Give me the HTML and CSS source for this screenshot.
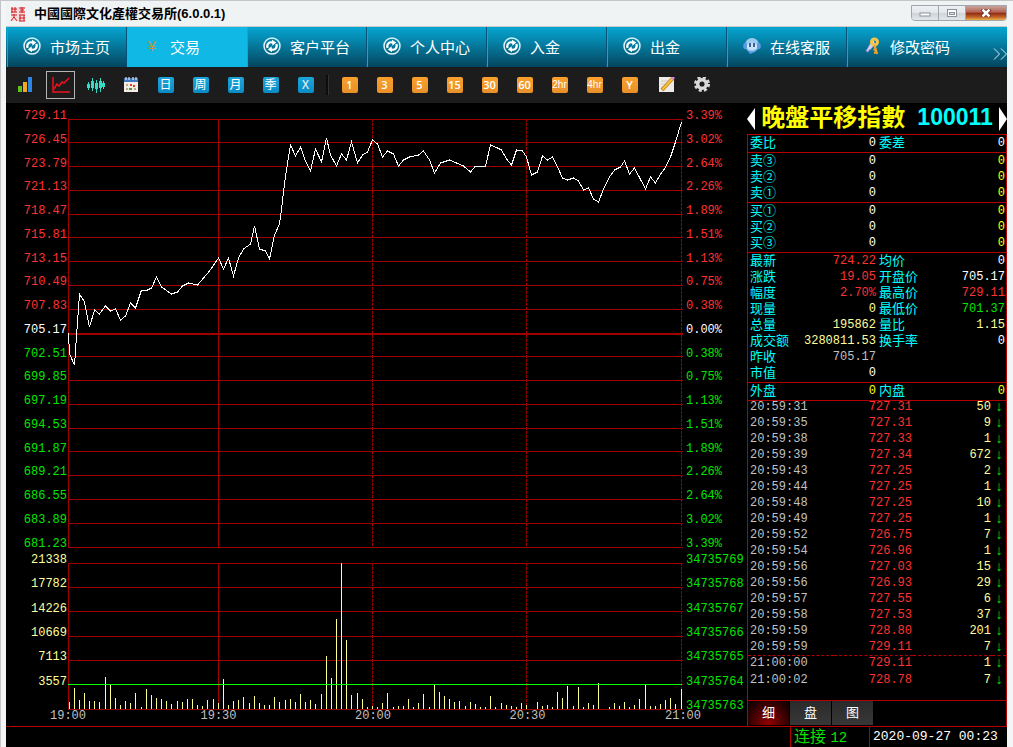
FILE: index.html
```html
<!DOCTYPE html>
<html lang="zh">
<head>
    <meta charset="UTF-8">
    <meta name="viewport" content="width=device-width, initial-scale=1.0">
    <title>中國國際文化產權交易所(6.0.0.1)</title>
    <link rel="stylesheet" href="styles.css">
</head>

<body>
    <svg class="defs" aria-hidden="true">
        <symbol id="swirl" viewBox="0 0 18 18">
            <circle cx="9" cy="9" r="8" fill="none" stroke="#d9f1f7" stroke-width="1.5"/>
            <path d="M4.5 11 C3.4 6.8 6.4 4.4 10 5.6" fill="none" stroke="#fff" stroke-width="2.2"/>
            <path d="M9 2.8 L13.2 5.6 L9.4 8.8 Z" fill="#fff"/>
            <path d="M13.5 7 C14.6 11.2 11.6 13.6 8 12.4" fill="none" stroke="#fff" stroke-width="2.2"/>
            <path d="M9 15.2 L4.8 12.4 L8.6 9.2 Z" fill="#fff"/>
        </symbol>
    </svg>

    <div class="window">
        <header class="titlebar">
            <svg class="seal" viewBox="0 0 16 16">
                <path d="M1 1H15V15H1Z" fill="#f7dcdc"/>
                <path d="M1 3H7M2 1V7M5 1V6M1 6H7M9 2H15M10 4H14M9 6H15M12 1V7M1 9H7M4 8V12M1 15L4 11L7 15M9 9H15M10 9V15M14 9V15M9 12H15M9 15H15" fill="none" stroke="#cf1c24" stroke-width="1"/>
            </svg>
            <h1>中國國際文化產權交易所(6.0.0.1)</h1>
            <div class="window-buttons">
                <button type="button" aria-label="最小化"><svg viewBox="0 0 12 8"><rect x="1" y="4" width="10" height="3" fill="#fff" stroke="#8a8f98"/></svg></button>
                <button type="button" aria-label="最大化"><svg viewBox="0 0 12 8"><rect x="1.5" y=".5" width="9" height="7" fill="#fff" stroke="#8a8f98"/><rect x="3.5" y="3.5" width="5" height="2" fill="#dde" stroke="#8a8f98"/></svg></button>
                <button type="button" class="close" aria-label="关闭"><svg viewBox="0 0 12 8"><path d="M2 0L10 8M10 0L2 8" stroke="#6b2a20" stroke-width="4"/><path d="M2.5 .5L9.5 7.5M9.5 .5L2.5 7.5" stroke="#fff" stroke-width="2.5"/></svg></button>
            </div>
        </header>

        <nav class="nav">
            <a href="#"><svg><use href="#swirl"/></svg>市场主页</a>
            <a href="#" class="active"><span class="yen">¥</span>交易</a>
            <a href="#"><svg><use href="#swirl"/></svg>客户平台</a>
            <a href="#"><svg><use href="#swirl"/></svg>个人中心</a>
            <a href="#"><svg><use href="#swirl"/></svg>入金</a>
            <a href="#"><svg><use href="#swirl"/></svg>出金</a>
            <a href="#"><svg viewBox="0 0 18 18">
                <circle cx="9" cy="8" r="7" fill="#9ccbf2"/>
                <ellipse cx="2.5" cy="9" rx="2.3" ry="3.2" fill="#5b9be0"/>
                <ellipse cx="15.5" cy="9" rx="2.3" ry="3.2" fill="#5b9be0"/>
                <path d="M4 8C4 5 14 5 14 8V11C13 13 5 13 4 11Z" fill="#c9e4fa"/>
                <path d="M7 6V10M11 6V10" stroke="#1b3f86" stroke-width="1.6"/>
                <path d="M4 13C8 15 11 15 14 12L12 15L7 17Z" fill="#5b9be0"/>
            </svg>在线客服</a>
            <a href="#"><svg viewBox="0 0 18 18">
                <path d="M10 2L3 14L5 15L6 13L8 12L12 7" fill="#d6d2f5" stroke="#8f8ad0" stroke-width=".8"/>
                <circle cx="11.5" cy="5" r="3" fill="none" stroke="#f9c44a" stroke-width="3"/>
                <path d="M11.5 8L14 17M13 12L10.5 13M13.5 15L11 16" stroke="#f2a325" stroke-width="2.2" fill="none"/>
            </svg>修改密码</a>
            <button type="button" class="more" aria-label="更多"><svg viewBox="0 0 14 12"><path d="M1 .5L6.5 6L1 11.5M8 .5L13.5 6L8 11.5" fill="none" stroke="#d5eef5"/></svg></button>
        </nav>

        <div class="toolbar">
            <button type="button" aria-label="行情"><svg viewBox="0 0 16 16"><rect x="0" y="9" width="4" height="6" fill="#5fc21a"/><rect x="5" y="5" width="4" height="10" fill="#f6a81c"/><rect x="10" y="0" width="4" height="15" fill="#2b86e8"/></svg></button>
            <button type="button" class="selected" aria-label="分时"><svg class="wide" viewBox="0 0 20 18"><path d="M2 1V16H19" fill="none" stroke="#f0101c" stroke-width="1.5"/><path d="M3 13L6 8L8 10L11 6L13 7L18 2" fill="none" stroke="#f0101c" stroke-width="1.5"/></svg></button>
            <button type="button" aria-label="K线"><svg class="wide" viewBox="0 0 20 18"><path d="M2.5 6V14M6.5 2V15M10.500 4V17M14.500 2V16M17.500 5V13" stroke="#34dcc4" stroke-width="1"/><path d="M2.500 8V12M6.500 5V12M10.500 7V13M14.500 5V12M17.500 7V11" stroke="#34dcc4" stroke-width="3"/></svg></button>
            <button type="button" aria-label="日历"><svg viewBox="0 0 16 16"><rect x="1" y="2" width="14" height="13" fill="#f4ede4"/><rect x="1" y="1" width="14" height="4" fill="#3f7ac0"/><path d="M3 0V3M6 0V3M10 0V3M13 0V3" stroke="#fff"/><path d="M3 8H5M3 12H5M11 12H13" stroke="#b8a898" stroke-width="2"/><path d="M7 8H9M10 9H12" stroke="#d8432b" stroke-width="2"/><path d="M6 12H9" stroke="#4c9c45" stroke-width="2"/></svg></button>
            <button type="button"><span class="tag">日</span></button>
            <button type="button"><span class="tag">周</span></button>
            <button type="button"><span class="tag">月</span></button>
            <button type="button"><span class="tag">季</span></button>
            <button type="button"><span class="tag">X</span></button>
            <span class="separator"></span>
            <button type="button"><span class="tag minute">1</span></button>
            <button type="button"><span class="tag minute">3</span></button>
            <button type="button"><span class="tag minute">5</span></button>
            <button type="button"><span class="tag minute">15</span></button>
            <button type="button"><span class="tag minute">30</span></button>
            <button type="button"><span class="tag minute">60</span></button>
            <button type="button"><span class="tag minute hour">2hr</span></button>
            <button type="button"><span class="tag minute hour">4hr</span></button>
            <button type="button"><span class="tag minute">Y</span></button>
            <button type="button" class="tools" aria-label="画线"><svg viewBox="0 0 16 16"><rect x="0" y="0" width="15" height="15" fill="#eeeae6"/><path d="M2 4H9M2 7H7M2 10H5" stroke="#cfcac6"/><path d="M3 13L14 1" stroke="#b87a14" stroke-width="3.5"/><path d="M3.5 12.5L14 1" stroke="#fbc43c" stroke-width="2"/><path d="M13 2L15 0" stroke="#d987d8" stroke-width="3"/></svg></button>
            <button type="button" aria-label="设置"><svg viewBox="0 0 16 16"><circle cx="8" cy="7" r="6" fill="none" stroke="#d8d8d8" stroke-width="4" stroke-dasharray="2.7 2.012"/><circle cx="8" cy="7" r="4.300" fill="none" stroke="#d8d8d8" stroke-width="3.500"/></svg></button>
        </div>

        <main class="main">
            <section class="chart">
                <ul class="axis left" id="priceAxis"></ul>
                <div class="plot">
                    <svg viewBox="68 119 615 429" preserveAspectRatio="none">
                        <g id="priceGrid"></g>
                        <polyline class="price" points="68.5,333 69.5,354 74.5,365 79.5,294 84.5,302 89.5,327 94.5,310 99.5,314 105.5,306 110.5,311 115.5,309 120.5,320 125.5,316 130.5,303 135.5,308 141.5,290 147.5,290 151.5,288 156.5,277 161.5,287 171.5,294 177.5,292 182.5,286 188.5,283 197.5,285 203.5,278 209.5,271 218.5,258 223.5,269 228.5,258 233.5,276 238.5,258 243.5,249 250.5,244 254.5,226 259.5,249 265.5,251 269.5,259 274.5,235 279.5,224 281.5,209 285.5,176 290.5,145 295.5,156 300.5,147 305.5,161 310.5,171 315.5,149 321.5,162 326.5,138 330.5,155 336.5,166 341.5,154 346.5,160 351.5,142 357.5,163 362.5,155 367.5,152 372.5,140 377.5,144 382.5,157 387.5,151 393.5,154 398.5,166 403.5,160 409.5,157 418.5,155 423.5,151 429.5,160 434.5,173 440.5,163 449.5,160 463.5,166 470.5,172 475.5,166 485.5,166 490.5,145 497.5,148 501.5,150 506.5,159 511.5,165 516.5,150 522.5,151 526.5,157 531.5,175 537.5,172 542.5,156 547.5,160 552.5,157 558.5,169 562.5,178 567.5,180 573.5,178 578.5,181 583.5,190 588.5,188 593.5,199 598.5,202 603.5,189 609.5,177 614.5,170 620.5,167 624.5,161 629.5,174 634.5,168 645.5,189 650.5,177 655.5,183 660.5,174 664.5,169 670.5,157 675.5,142 681.5,122"/>
                    </svg>
                </div>
                <ul class="axis right" id="percentAxis"></ul>

                <ul class="axis left volume-axis">
                    <li>21338</li><li>17782</li><li>14226</li><li>10669</li><li>7113</li><li>3557</li><li></li>
                </ul>
                <div class="plot">
                    <svg viewBox="68 563 615 147" preserveAspectRatio="none">
                        <g id="volumeGrid"></g>
                        <path class="bars" id="volumeBars"/>
                        <path class="open-interest" d="M68 684.5H682"/>
                    </svg>
                </div>
                <ul class="axis right down">
                    <li>34735769</li><li>34735768</li><li>34735767</li><li>34735766</li><li>34735765</li><li>34735764</li><li>34735763</li>
                </ul>

                <ul class="time-axis">
                    <li>19:00</li><li>19:30</li><li>20:00</li><li>20:30</li><li>21:00</li>
                </ul>
            </section>

            <aside class="quote">
                <div class="symbol">
                    <button type="button" aria-label="上一个"><svg viewBox="0 0 8 24"><path d="M8 1V23L0 12Z" fill="#fff"/></svg></button>
                    <h2>晚盤平移指數</h2>
                    <span class="code">100011</span>
                    <button type="button" aria-label="下一个"><svg viewBox="0 0 8 24"><path d="M0 0V24L8 12Z" fill="#fff"/></svg></button>
                </div>
                <div class="board">
                    <table class="block">
                        <tr><th>委比</th><td>0</td><th>委差</th><td>0</td></tr>
                    </table>
                    <table class="block">
                        <tr><th>卖③</th><td>0</td><th></th><td class="yellow">0</td></tr>
                        <tr><th>卖②</th><td>0</td><th></th><td class="yellow">0</td></tr>
                        <tr><th>卖①</th><td>0</td><th></th><td class="yellow">0</td></tr>
                    </table>
                    <table class="block">
                        <tr><th>买①</th><td>0</td><th></th><td class="yellow">0</td></tr>
                        <tr><th>买②</th><td>0</td><th></th><td class="yellow">0</td></tr>
                        <tr><th>买③</th><td>0</td><th></th><td class="yellow">0</td></tr>
                    </table>
                    <table class="block">
                        <tr><th>最新</th><td class="up">724.22</td><th>均价</th><td>0</td></tr>
                        <tr><th>涨跌</th><td class="up">19.05</td><th>开盘价</th><td>705.17</td></tr>
                        <tr><th>幅度</th><td class="up">2.70%</td><th>最高价</th><td class="up">729.11</td></tr>
                        <tr><th>现量</th><td class="vol">0</td><th>最低价</th><td class="down">701.37</td></tr>
                        <tr><th>总量</th><td class="vol">195862</td><th>量比</th><td class="vol">1.15</td></tr>
                        <tr><th>成交额</th><td class="vol">3280811.53</td><th>换手率</th><td>0</td></tr>
                        <tr><th>昨收</th><td class="grey">705.17</td><th></th><td></td></tr>
                        <tr><th>市值</th><td>0</td><th></th><td></td></tr>
                    </table>
                    <table class="block">
                        <tr><th>外盘</th><td class="yellow">0</td><th>内盘</th><td class="yellow">0</td></tr>
                    </table>
                    <div class="ticks">
                        <table id="ticks"></table>
                    </div>
                    <div class="tabs">
                        <button type="button" class="active">细</button>
                        <button type="button">盘</button>
                        <button type="button">图</button>
                    </div>
                </div>
            </aside>
        </main>

        <footer class="status">
            <span class="connection">连接 <span class="num">12</span></span>
            <time class="num">2020-09-27 00:23</time>
        </footer>
    </div>

    <script src="chart.js"></script>
</body>
</html>
```
FILE: styles.css
```css
* {
    box-sizing: border-box;
}

body {
    margin: 0;
    background: #f3f5f6;
    font-family: "Liberation Sans", "Noto Sans CJK SC", sans-serif;
    color: #fff;
}

ul {
    list-style: none;
    margin: 0;
    padding: 0;
}

button {
    font-family: inherit;
    color: inherit;
    border: none;
    padding: 0;
    background: none;
    cursor: pointer;
}

svg {
    display: block;
}

.defs {
    display: none;
}

.window {
    height: 100vh;
    min-height: 700px;
    display: flex;
    flex-direction: column;
    padding: 0 6px 0 5px;
    border-left: 1px solid #c4c6c8;
    border-top: 1px solid #c4c6c8;
    overflow: hidden;
}

/* title bar */
.titlebar {
    flex: 0 0 26px;
    display: flex;
    align-items: center;
    gap: 8px;
    padding-left: 4px;
    border-bottom: 1px solid #c9c9c9;
    background: #f0f3f4;
    color: #000;
}

.seal {
    width: 16px;
    height: 16px;
}

.titlebar h1 {
    margin: 0;
    font-size: 13px;
    line-height: 20px;
    font-family: "Liberation Sans", "Noto Sans CJK TC", sans-serif;
}

.window-buttons {
    display: flex;
    align-self: flex-start;
    margin: 4px 0 0 auto;
    height: 16px;
    border: 1px solid #a3a7ab;
    border-radius: 0 0 4px 4px;
    overflow: hidden;
}

.window-buttons button {
    width: 27px;
    display: flex;
    justify-content: center;
    align-items: center;
    border-right: 1px solid #a3a7ab;
    background: linear-gradient(#eef1f4 0%, #e2e6ea 50%, #cfd4d9 50%, #e2e6ea 100%);
}

.window-buttons svg {
    width: 12px;
    height: 8px;
}

.window-buttons .close {
    width: 40px;
    border: none;
    background: linear-gradient(#c9a49c 0%, #b4604e 45%, #8c2813 50%, #c4662a 80%, #e8b04a 100%);
}

/* main menu */
.nav {
    flex: 0 0 40px;
    display: flex;
    padding-left: 1px;
    background: linear-gradient(#05a6d3, #04455e);
}

.nav a {
    flex: 0 0 120px;
    display: flex;
    align-items: center;
    gap: 9px;
    padding: 0 0 2px 15px;
    border-left: 1px solid #2b9cc6;
    border-right: 1px solid #04527a;
    color: #fff;
    font-size: 15px;
    text-decoration: none;
    white-space: nowrap;
}

.nav a.active {
    background: #10b8e6;
    border-color: #10b8e6;
}

.nav a:last-of-type {
    border-right: none;
}

.nav a svg,
.nav .yen {
    width: 18px;
    height: 18px;
}

.nav .yen {
    font-size: 15px;
    line-height: 18px;
    text-align: center;
    color: #b8974a;
}

.nav .more {
    margin-left: auto;
    padding-top: 13px;
}

.nav .more svg {
    width: 14px;
    height: 12px;
}

/* period toolbar */
.toolbar {
    flex: 0 0 36px;
    display: flex;
    align-items: center;
    gap: 6px;
    padding-left: 5px;
    background: #1c1c1c;
}

.toolbar button {
    flex: 0 0 29px;
    height: 28px;
    display: flex;
    justify-content: center;
    align-items: center;
}

.toolbar button.selected {
    border: 1px solid #b4b4b4;
}

.toolbar svg {
    width: 16px;
    height: 16px;
}

.toolbar svg.wide {
    width: 20px;
    height: 18px;
}

.toolbar .tools {
    margin-left: 2px;
}

.separator {
    width: 3px;
    height: 20px;
    border-left: 2px solid #0c0c0c;
    border-right: 1px solid #333;
}

.tag {
    width: 16px;
    height: 16px;
    border-radius: 2px;
    background: linear-gradient(#1ba6dc, #0d8bc4);
    font: 12px/16px "Open Sans", "Noto Sans CJK SC", sans-serif;
    text-align: center;
}

.tag.minute {
    background: linear-gradient(#fba02c, #e8912a);
    font-weight: 600;
    font-size: 11px;
}

.tag.hour {
    font: 10px/16px "Liberation Sans", sans-serif;
}

/* chart */
.main {
    flex: 1;
    min-height: 0;
    display: grid;
    grid-template-columns: 1fr 260px;
    grid-template-rows: minmax(0, 1fr);
    background: #000;
}

.chart {
    display: grid;
    grid-template-columns: 62px 1fr 64px;
    grid-template-rows: 440fr 158fr 10px;
    row-gap: 4px;
    padding-top: 7px;
    min-width: 0;
    font: 12px/12px "Liberation Mono", monospace;
}

.axis {
    display: flex;
    flex-direction: column;
    justify-content: space-between;
    color: #ff3232;
}

.axis li {
    height: 12px;
}

.axis.left {
    padding-right: 1px;
    text-align: right;
}

.axis.right {
    padding-left: 3px;
}

.axis .flat {
    color: #fff;
}

.axis.down,
.down {
    color: #00e600;
}

.volume-axis {
    color: #ffff9b;
}

.plot {
    min-height: 0;
    margin: 9px 0 2px;
}

.plot svg {
    width: 100%;
    height: 100%;
    shape-rendering: crispEdges;
}

.plot path,
.plot polyline {
    fill: none;
    stroke: #a00000;
    stroke-width: 1px;
    vector-effect: non-scaling-stroke;
}

.plot .dotted {
    stroke-dasharray: 3 1;
}

.plot .middle {
    stroke-width: 2px;
}

.plot .price {
    stroke: #fff;
}

.plot .bars {
    stroke: #ffff8c;
}

.plot .open-interest {
    stroke: #00ff00;
}

.time-axis {
    grid-column: 2;
    display: grid;
    grid-template-columns: 150fr 154fr 154fr 155fr 0;
    margin-top: -6px;
    color: #c0c0c0;
}

.time-axis li {
    width: 36px;
    margin-left: -18px;
}

/* quote panel */
.quote {
    display: flex;
    flex-direction: column;
    min-height: 0;
}

.symbol {
    flex: 0 0 31px;
    display: flex;
    align-items: center;
    justify-content: space-between;
}

.symbol svg {
    width: 8px;
    height: 24px;
}

.symbol h2 {
    margin: 0 6px 6px 0;
    font: bold 24px/24px "Noto Sans CJK TC", sans-serif;
    color: #ffff00;
}

.symbol .code {
    margin-bottom: 4px;
    font-size: 23px;
    line-height: 24px;
    font-weight: bold;
    color: #00ffff;
}

.board {
    flex: 1;
    min-height: 0;
    display: flex;
    flex-direction: column;
    border: 1px solid #b40000;
    border-width: 0 1px;
}

.quote table {
    width: 100%;
    border-collapse: collapse;
    table-layout: fixed;
    font: 12px/16px "Liberation Mono", monospace;
}

.block {
    border-top: 1px solid #b40000;
    border-bottom: 1px solid transparent;
}

.quote tr {
    height: 16px;
}

.quote th,
.quote td {
    height: 16px;
    padding: 0 1px 0 0;
    text-align: right;
    white-space: nowrap;
}

.quote th {
    width: 43px;
    padding: 0 0 0 2px;
    font: 13px/16px "Liberation Sans", "Noto Sans CJK SC", sans-serif;
    text-align: left;
    color: #00ffff;
}

.quote .up {
    color: #ff3232;
}

.yellow {
    color: #ffff00;
}

.vol {
    color: #ffff9b;
}

.grey {
    color: #c0c0c0;
}

.ticks {
    flex: 1;
    min-height: 0;
    border-top: 1px solid #b40000;
}

.ticks table {
    margin-top: -2px;
}

.ticks td:first-child {
    width: 86px;
    padding-left: 2px;
    text-align: left;
}

.ticks td:nth-child(2) {
    width: 79px;
}

.ticks td:last-child {
    width: 14px;
    padding: 0;
    text-align: center;
    font-size: 14px;
}

.ticks .session td {
    border-top: 1px dashed #b40000;
    line-height: 15px;
}

.tabs {
    flex: 0 0 26px;
    display: flex;
    gap: 1px;
    border-top: 1px solid #b40000;
    padding-bottom: 1px;
}

.tabs button {
    width: 41px;
    padding-bottom: 3px;
    font-size: 13px;
    background: linear-gradient(#2a2a2a, #383838);
}

.tabs button.active {
    background: radial-gradient(ellipse at bottom, #960000, #100 90%);
}

/* status bar */
.status {
    flex: 0 0 21px;
    min-height: 0;
    display: flex;
    justify-content: flex-end;
    border-top: 1px solid #b40000;
    background: #000;
    line-height: 20px;
}

.status .num {
    font-family: "Liberation Mono", monospace;
}

.connection {
    width: 79px;
    padding-left: 3px;
    border-left: 1px solid #b40000;
    font-size: 16px;
    color: #00e600;
}

.connection .num {
    font-size: 14px;
    line-height: 16px;
}

.status time {
    width: 138px;
    padding-left: 3px;
    border-left: 1px solid #b40000;
    font-size: 13px;
}
```
FILE: chart.js
```js
// axis labels: price on the left, change on the right
const prices = ["729.11", "726.45", "723.79", "721.13", "718.47", "715.81", "713.15", "710.49", "707.83", "705.17",
    "702.51", "699.85", "697.19", "694.53", "691.87", "689.21", "686.55", "683.89", "681.23"];
const percents = ["3.39%", "3.02%", "2.64%", "2.26%", "1.89%", "1.51%", "1.13%", "0.75%", "0.38%", "0.00%",
    "0.38%", "0.75%", "1.13%", "1.51%", "1.89%", "2.26%", "2.64%", "3.02%", "3.39%"];

function fillAxis(id, labels) {
    document.getElementById(id).innerHTML = labels.map((text, i) => {
        const cls = i < 9 ? "up" : i === 9 ? "flat" : "down";
        return `<li class="${cls}">${text}</li>`;
    }).join("");
}

fillAxis("priceAxis", prices);
fillAxis("percentAxis", percents);

// grid lines
function drawGrid(id, top, bottom, steps, middle) {
    let html = "";
    for (let i = 0; i <= steps; i++) {
        const y = Math.floor(top + (bottom - top) * i / steps);
        html += i === middle
            ? `<path class="middle" d="M68 ${y + 1}H683"/>`
            : `<path d="M68 ${y + 0.5}H683"/>`;
    }
    html += `<path d="M68.5 ${top}V${bottom}M218.5 ${top}V${bottom}"/>`;
    [372, 526, 681].forEach(x => {
        html += `<path class="dotted" d="M${x + 0.5} ${top}V${bottom}"/>`;
    });
    document.getElementById(id).innerHTML = html;
}

drawGrid("priceGrid", 119, 547, 18, 9);
drawGrid("volumeGrid", 563, 709, 6, -1);

// volume bars: [x, height]
const volumes = [
    [69, 7], [74, 21], [79, 9], [84, 16], [89, 8], [94, 8], [99, 7], [105, 32], [110, 24], [115, 11], [120, 4],
    [125, 8], [130, 6], [135, 16], [141, 2], [146, 20], [151, 14], [156, 11], [161, 10], [166, 8], [171, 5],
    [177, 8], [182, 7], [187, 10], [192, 10], [197, 4], [202, 3], [207, 9], [213, 10], [218, 6], [223, 30],
    [228, 4], [233, 8], [238, 9], [243, 12], [249, 6], [254, 13], [259, 6], [264, 4], [269, 4], [274, 12],
    [279, 7], [285, 9], [290, 10], [295, 7], [300, 15], [305, 7], [310, 9], [315, 5], [321, 15], [326, 53],
    [331, 31], [336, 90], [341, 146], [346, 69], [351, 14], [357, 16], [362, 10], [367, 2], [372, 3], [377, 2],
    [382, 6], [387, 16], [393, 2], [398, 3], [403, 3], [408, 10], [413, 2], [418, 6], [423, 15], [429, 2],
    [434, 24], [439, 17], [444, 13], [449, 10], [454, 7], [459, 8], [465, 3], [470, 7], [475, 5], [480, 2],
    [485, 2], [490, 13], [495, 2], [501, 6], [506, 4], [511, 3], [516, 2], [521, 6], [526, 4], [537, 7],
    [542, 3], [547, 4], [552, 2], [557, 17], [562, 11], [567, 23], [573, 3], [578, 22], [583, 2], [588, 6],
    [593, 4], [598, 26], [609, 2], [614, 6], [619, 3], [624, 7], [629, 2], [634, 4], [639, 10], [645, 24],
    [650, 3], [655, 3], [660, 5], [665, 9], [670, 11], [675, 5], [681, 20]
];

document.getElementById("volumeBars").setAttribute("d",
    volumes.map(([x, h]) => `M${x + 0.5} 709v-${h}`).join(""));

// trades
const ticks = [
    ["20:59:31", "727.31", 50], ["20:59:35", "727.31", 9], ["20:59:38", "727.33", 1], ["20:59:39", "727.34", 672],
    ["20:59:43", "727.25", 2], ["20:59:44", "727.25", 1], ["20:59:48", "727.25", 10], ["20:59:49", "727.25", 1],
    ["20:59:52", "726.75", 7], ["20:59:54", "726.96", 1], ["20:59:56", "727.03", 15], ["20:59:56", "726.93", 29],
    ["20:59:57", "727.55", 6], ["20:59:58", "727.53", 37], ["20:59:59", "728.80", 201], ["20:59:59", "729.11", 7],
    ["21:00:00", "729.11", 1], ["21:00:02", "728.78", 7]
];

document.getElementById("ticks").innerHTML = ticks.map(([time, price, vol]) =>
    `<tr class="${time === "21:00:00" ? "session" : ""}"><td class="grey">${time}</td><td class="up">${price}</td>` +
    `<td class="vol">${vol}</td><td class="down">↓</td></tr>`).join("");
```
